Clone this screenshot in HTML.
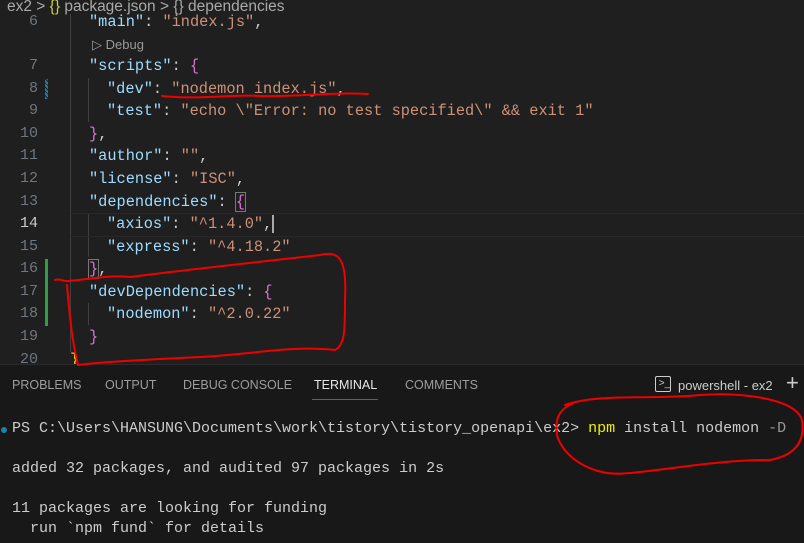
<!DOCTYPE html>
<html><head><meta charset="utf-8"><style>
body{margin:0;width:804px;height:542px;background:#1f1f1f;overflow:hidden;position:relative;font-family:"Liberation Mono",monospace}
.l{position:absolute;font-size:15.3px;white-space:pre;line-height:20px}
.n{position:absolute;width:38px;text-align:right;color:#6e7681;font-size:15px;line-height:20px}
.k{color:#9cdcfe}.s{color:#ce9178}.p{color:#cccccc}.b{color:#da70d6}.y{color:#ffd700}
.t{position:absolute;font-family:"Liberation Sans",sans-serif;font-size:12.5px;color:#9d9d9d;top:378px}
.g{position:absolute;width:1px;background:#404040}
.tl{position:absolute;font-size:15px;white-space:pre;line-height:20px;left:12px;color:#cccccc}
</style></head><body>
<div style="position:absolute;top:-2px;left:7px;font-family:'Liberation Sans',sans-serif;font-size:15.5px;color:#a9a9a9;white-space:pre;line-height:18px">ex2 &gt; <span style="color:#cbcb41">{}</span> package.json &gt; {} dependencies</div>
<div class="g" style="left:70px;top:14px;height:338px"></div>
<div class="g" style="left:88px;top:78px;height:44px"></div>
<div class="g" style="left:88px;top:213px;height:44px"></div>
<div class="g" style="left:88px;top:303px;height:22px"></div>
<div style="position:absolute;left:45px;top:79px;width:3px;height:20px;background:repeating-linear-gradient(45deg,#1b81a8 0 2px,#1f1f1f 2px 3px)"></div>
<div style="position:absolute;left:45px;top:259px;width:3px;height:67px;background:#2ea043"></div>
<div style="position:absolute;left:70px;top:213px;width:734px;height:22px;border-top:1px solid #282828;border-bottom:1px solid #282828"></div>
<div class="n" style="top:12px">6</div><div class="l" style="left:89px;top:12px"><span class="k">"main"</span><span class="p">: </span><span class="s">"index.js"</span><span class="p">,</span></div>
<div style="position:absolute;left:92px;top:37px;font-family:'Liberation Sans',sans-serif;font-size:13px;color:#999">▷ Debug</div>
<div class="n" style="top:56px">7</div><div class="l" style="left:89px;top:56px"><span class="k">"scripts"</span><span class="p">: </span><span class="b">{</span></div>
<div class="n" style="top:79px">8</div><div class="l" style="left:107px;top:79px"><span class="k">"dev"</span><span class="p">: </span><span class="s">"nodemon index.js"</span><span class="p">,</span></div>
<div class="n" style="top:101px">9</div><div class="l" style="left:107px;top:101px"><span class="k">"test"</span><span class="p">: </span><span class="s">"echo \"Error: no test specified\" &amp;&amp; exit 1"</span></div>
<div class="n" style="top:124px">10</div><div class="l" style="left:89px;top:124px"><span class="b">}</span><span class="p">,</span></div>
<div class="n" style="top:146px">11</div><div class="l" style="left:89px;top:146px"><span class="k">"author"</span><span class="p">: </span><span class="s">""</span><span class="p">,</span></div>
<div class="n" style="top:169px">12</div><div class="l" style="left:89px;top:169px"><span class="k">"license"</span><span class="p">: </span><span class="s">"ISC"</span><span class="p">,</span></div>
<div class="n" style="top:192px">13</div><div class="l" style="left:89px;top:192px"><span class="k">"dependencies"</span><span class="p">: </span><span class="b" style="outline:1px solid #777">{</span></div>
<div class="n" style="top:214px;color:#ccc">14</div><div class="l" style="left:107px;top:214px"><span class="k">"axios"</span><span class="p">: </span><span class="s">"^1.4.0"</span><span class="p">,</span><span style="border-left:2px solid #aaa"></span></div>
<div class="n" style="top:237px">15</div><div class="l" style="left:107px;top:237px"><span class="k">"express"</span><span class="p">: </span><span class="s">"^4.18.2"</span></div>
<div class="n" style="top:259px">16</div><div class="l" style="left:89px;top:259px"><span class="b" style="outline:1px solid #777">}</span><span class="p">,</span></div>
<div class="n" style="top:282px">17</div><div class="l" style="left:89px;top:282px"><span class="k">"devDependencies"</span><span class="p">: </span><span class="b">{</span></div>
<div class="n" style="top:304px">18</div><div class="l" style="left:107px;top:304px"><span class="k">"nodemon"</span><span class="p">: </span><span class="s">"^2.0.22"</span></div>
<div class="n" style="top:327px">19</div><div class="l" style="left:89px;top:327px"><span class="b">}</span></div>
<div class="n" style="top:350px">20</div><div class="l" style="left:70px;top:350px"><span class="y">}</span></div>
<div style="position:absolute;left:0;top:364px;width:804px;height:178px;background:#181818;border-top:1px solid #2b2b2b"></div>
<div class="t" style="left:12px">PROBLEMS</div>
<div class="t" style="left:105px">OUTPUT</div>
<div class="t" style="left:183px">DEBUG CONSOLE</div>
<div class="t" style="left:314px;color:#e7e7e7">TERMINAL</div>
<div style="position:absolute;left:312px;top:399px;width:66px;height:1px;background:#0078d4"></div>
<div class="t" style="left:405px">COMMENTS</div>
<div style="position:absolute;left:655px;top:376px;width:14px;height:14px;border:1px solid #ccc;border-radius:2px;color:#ccc;font-size:10px;line-height:13px;font-family:'Liberation Sans'">&nbsp;&gt;_</div>
<div class="t" style="left:678px;color:#ccc;font-size:13px">powershell - ex2</div>
<div style="position:absolute;left:786px;top:370px;color:#ccc;font-size:22px;font-family:'Liberation Sans';line-height:26px">+</div>
<div style="position:absolute;left:1px;top:427px;width:6px;height:6px;border-radius:50%;background:#1b81a8"></div>
<div class="tl" style="top:419px">PS C:\Users\HANSUNG\Documents\work\tistory\tistory_openapi\ex2&gt; <span style="color:#f0f000">npm</span> install nodemon <span style="color:#999">-D</span></div>
<div class="tl" style="top:459px">added 32 packages, and audited 97 packages in 2s</div>
<div class="tl" style="top:499px">11 packages are looking for funding</div>
<div class="tl" style="top:519px">  run `npm fund` for details</div>
<svg style="position:absolute;left:0;top:0" width="804" height="542" fill="none" stroke="#e00" stroke-width="2" stroke-linecap="round">
<path d="M162 96 C200 100 230 94 260 96 C300 97 330 92 368 94"/>
<path d="M55 280 C60 278 65 282 68 281 C100 278 110 275 130 277 C200 268 260 262 320 255 C340 250 347 260 345 300 C345 330 345 345 335 350 C290 345 250 355 200 357 C140 360 100 362 78 365 C72 340 70 320 67 285"/>
<path d="M565 405 C600 393 650 400 700 395 C740 392 795 398 802 420 C805 440 797 455 770 460 C720 460 680 468 630 473 C590 478 562 455 557 435 C555 420 558 410 572 404"/>
</svg>
</body></html>
